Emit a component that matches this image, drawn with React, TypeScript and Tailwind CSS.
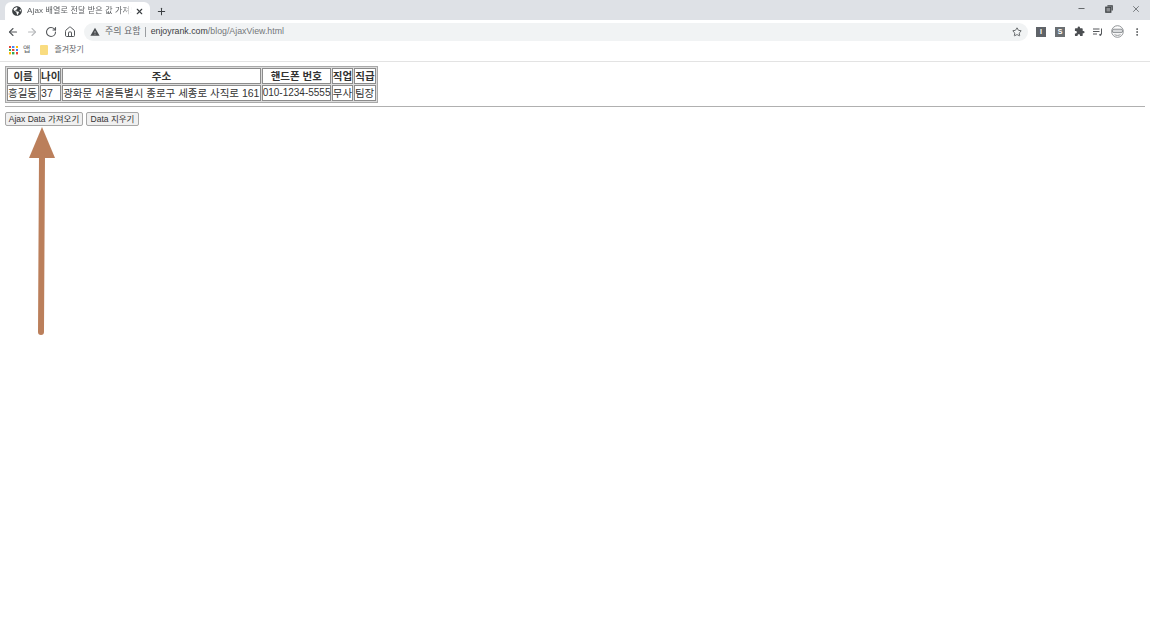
import React from "react";
import { ArrowLeft, ArrowRight, RotateCw, Home, Star, X, Plus, Minus, MoreVertical } from "lucide-react";
import { FaGlobeAmericas } from "react-icons/fa";
import { MdExtension, MdWarning } from "react-icons/md";

const KR = "font-['Liberation_Sans','Noto_Sans_CJK_KR',sans-serif]";

function AppsGrid() {
  const colors = ["#ea4335", "#4285f4", "#fbbc05", "#34a853", "#ea4335", "#4285f4", "#fbbc05", "#34a853", "#ea4335"];
  return (
    <div className="grid grid-cols-3 gap-[1px] w-[9px] h-[9px]">
      {colors.map((c, i) => (
        <svg key={i} width="2.4" height="2.4" viewBox="0 0 2 2"><rect width="2" height="2" fill={c} /></svg>
      ))}
    </div>
  );
}

const heads = [
  ["이름", "w-[32px]"],
  ["나이", "w-[21px]"],
  ["주소", "w-[198px]"],
  ["핸드폰 번호", "w-[69px]"],
  ["직업", "w-[21px]"],
  ["직급", "w-[22px]"],
];
const row = ["홍길동", "37", "광화문 서울특별시 종로구 세종로 사직로 161", "010-1234-5555", "무사", "팀장"];

export default function App() {
  return (
    <div className={`relative w-[1150px] h-[629px] bg-white overflow-hidden ${KR}`}>
      {/* Tab strip */}
      <div className="h-[20px] bg-[#dee1e6] flex items-end pl-[5px]">
        <div className="w-[145px] h-[18px] bg-white rounded-t-[6px] flex items-center pl-[7px] pr-[6px]">
          <FaGlobeAmericas className="w-[10px] h-[10px] text-[#3c4043] shrink-0" />
          <span className="ml-[5px] text-[8px] tracking-[0.15px] text-[#5a5d60] whitespace-nowrap w-[105px] [mask-image:linear-gradient(to_right,black_92%,transparent)]">Ajax 배열로 전달 받은 값 가져오</span>
          <X className="ml-[3px] w-[9px] h-[9px] text-[#3c4043] shrink-0" strokeWidth={3} />
        </div>
        <Plus className="ml-[6px] mb-[3px] w-[11px] h-[11px] text-[#3c4043]" strokeWidth={2.2} />
        <div className="ml-auto flex items-center h-full pb-[3px]">
          <Minus className="w-[9px] h-[9px] text-[#3c4043] mr-[19px]" strokeWidth={2} />
          <svg className="mr-[18px]" width="8" height="8" viewBox="0 0 8 8" fill="none" stroke="#3c4043" strokeWidth="1.2"><rect x="0.8" y="2.2" width="5" height="5" fill="#8a8d90" /><path d="M2.4 .8h4.8v4.8" /></svg>
          <X className="w-[10px] h-[10px] text-[#3c4043] mr-[9px]" strokeWidth={1.5} />
        </div>
      </div>

      {/* Toolbar */}
      <div className="h-[21px] pt-[2px] flex items-center">
        <div className="flex items-center pl-[7px] gap-[7px]">
          <ArrowLeft className="w-[12px] h-[12px] text-[#54575a]" strokeWidth={2.2} />
          <ArrowRight className="w-[12px] h-[12px] text-[#b8babc]" strokeWidth={2.2} />
          <RotateCw className="w-[12px] h-[12px] text-[#54575a]" strokeWidth={2.2} />
          <Home className="w-[12px] h-[12px] text-[#54575a]" strokeWidth={2} />
        </div>
        <div className="ml-[8px] w-[944px] h-[18px] rounded-full bg-[#f1f3f4] flex items-center pl-[6px] pr-[6px]">
          <MdWarning className="w-[10px] h-[10px] text-[#4c4f52]" />
          <span className="ml-[5px] text-[9px] text-[#66696c] whitespace-nowrap">주의 요함</span>
          <span className="ml-[4px] w-px h-[10px] bg-[#9a9da0]" />
          <span className="ml-[5px] text-[8.8px] text-[#74777a]">
            <span className="text-[#3c4043]">enjoyrank.com</span>/blog/AjaxView.html
          </span>
          <Star className="ml-auto w-[10px] h-[10px] text-[#4c4f52]" strokeWidth={2} />
        </div>
        <div className="flex items-center ml-[8px]">
          <span className="w-[10px] h-[10px] bg-[#5f6368] text-white text-[7px] leading-[10px] text-center font-bold">I</span>
          <span className="ml-[9px] w-[10px] h-[10px] bg-[#6b6f72] text-white text-[7px] leading-[10px] text-center font-bold">S</span>
          <MdExtension className="ml-[9px] w-[11px] h-[11px] text-[#4c4f52]" />
          <svg className="ml-[8px]" width="10" height="10" viewBox="0 0 10 10" fill="none" stroke="#54575a" strokeWidth="1"><path d="M0 2h6.5M0 4.5h6.5M0 7h4" /><path d="M8.5 1.5v6" /><circle cx="7.3" cy="7.8" r="1.1" fill="#54575a" stroke="none" /></svg>
          <svg className="ml-[8px]" width="13" height="13" viewBox="0 0 13 13" fill="none" stroke="#85888b" strokeWidth="0.9"><circle cx="6.5" cy="6.5" r="5.8" /><rect x="1.3" y="4.2" width="10.4" height="3.4" rx="1.7" fill="#d8dadc" /><path d="M3.5 9.6c1.8 1 4.2 1 6 0" /></svg>
          <MoreVertical className="ml-[8px] w-[10px] h-[10px] text-[#54575a]" strokeWidth={2.4} />
        </div>
      </div>

      {/* Bookmarks */}
      <div className="h-[18px] pb-[1px] flex items-center pl-[9px] border-b-[3px] border-b-transparent box-content">
        <AppsGrid />
        <span className="ml-[5px] text-[8px] text-[#66696c]">앱</span>
        <svg className="ml-[10px]" width="8" height="10" viewBox="0 0 8 10"><rect width="8" height="10" rx="1" fill="#f9dc80" /></svg>
        <span className="ml-[6px] text-[8px] text-[#66696c]">즐겨찾기</span>
      </div>
      <div className="h-px bg-[#e3e3e3] -mt-[2px] mb-px" />

      {/* Page */}
      <div className="pt-[3px] px-[5px]">
        <table className="border-separate border-spacing-[1px] border border-[#a9a9a9] bg-[#dcdcdc] text-[10.5px] leading-[14px] text-[#333] table-fixed w-[373px]">
          <thead>
            <tr>
              {heads.map(([h, w]) => (
                <th key={h} className={`${w} h-[16px] p-0 bg-white border border-[#8c8c8c] font-bold text-center whitespace-nowrap`}>{h}</th>
              ))}
            </tr>
          </thead>
          <tbody>
            <tr>
              {row.map((c) => (
                <td key={c} className={`h-[15px] p-0 bg-white border border-[#8c8c8c] whitespace-nowrap ${c.startsWith("010") ? "text-[10px]" : ""}`}>{c}</td>
              ))}
            </tr>
          </tbody>
        </table>
        <hr className="mt-[3px] w-[1140px] border-t-[1px] border-[#b0b0b0]" />
        <div className="mt-[5px] flex gap-[3px]">
          <button className="w-[78px] h-[14px] bg-[#f0f0f0] border border-[#a6a6a6] rounded-[2px] text-[8.5px] leading-[12px] text-[#333] whitespace-nowrap">Ajax Data 가져오기</button>
          <button className="w-[53px] h-[14px] bg-[#f0f0f0] border border-[#a6a6a6] rounded-[2px] text-[8.5px] leading-[12px] text-[#333] whitespace-nowrap">Data 지우기</button>
        </div>
      </div>

      {/* Annotation arrow */}
      <svg className="absolute left-0 top-0 pointer-events-none" width="80" height="345" viewBox="0 0 80 345">
        <polygon points="42,127 55,158 29,158" fill="#bb7f5b" />
        <line x1="42" y1="155" x2="41" y2="332" stroke="#bb7f5b" strokeWidth="6" strokeLinecap="round" />
      </svg>
    </div>
  );
}
